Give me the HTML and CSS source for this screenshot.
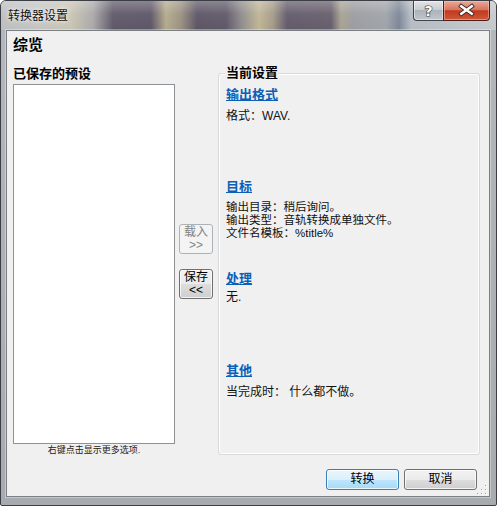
FILE: index.html
```html
<!DOCTYPE html>
<html lang="zh-CN">
<head>
<meta charset="utf-8">
<title>转换器设置</title>
<link rel="stylesheet" href="styles.css">
</head>
<body>
<div class="window">
  <div class="titlebar">
    <span class="title">转换器设置</span>
    <div class="caption-btns">
      <div class="cap help">
        <svg width="29" height="19" viewBox="0 0 29 19"><text x="14.5" y="15" text-anchor="middle" class="q">?</text></svg>
      </div>
      <div class="cap close">
        <svg width="47" height="19" viewBox="0 0 47 19">
          <path d="M18 5 L29 13 M29 5 L18 13" stroke="#3a2a28" stroke-width="4.5" stroke-linecap="square"/>
          <path d="M18 5 L29 13 M29 5 L18 13" stroke="#fff" stroke-width="2.6" stroke-linecap="square"/>
        </svg>
      </div>
    </div>
  </div>
  <div class="frame">
    <div class="client">
      <div class="page-title">综览</div>
      <div class="main">
        <div class="presets">
          <div class="label">已保存的预设</div>
          <div class="listbox"></div>
          <div class="hint">右键点击显示更多选项.</div>
        </div>
        <div class="transfer">
          <button class="btn small disabled">载入<br>&gt;&gt;</button>
          <button class="btn small save">保存<br>&lt;&lt;</button>
        </div>
        <fieldset class="group">
          <legend>当前设置</legend>
          <div class="section">
            <a class="sec-head">输出格式</a>
            <div class="sec-text">格式：WAV.</div>
          </div>
          <div class="section">
            <a class="sec-head">目标</a>
            <div class="sec-text multi">输出目录：稍后询问。<br>输出类型：音轨转换成单独文件。<br>文件名模板：%title%</div>
          </div>
          <div class="section">
            <a class="sec-head">处理</a>
            <div class="sec-text tight">无.</div>
          </div>
          <div class="section">
            <a class="sec-head">其他</a>
            <div class="sec-text">当完成时： 什么都不做。</div>
          </div>
        </fieldset>
      </div>
      <div class="footer">
        <button class="btn big default">转换</button>
        <button class="btn big">取消</button>
      </div>
      <svg class="grip" width="10" height="10" viewBox="0 0 10 10">
        <g fill="#fff">
          <rect x="9" y="1" width="1" height="1"/><rect x="9" y="5" width="1" height="1"/><rect x="9" y="9" width="1" height="1"/>
          <rect x="5" y="5" width="1" height="1"/><rect x="5" y="9" width="1" height="1"/><rect x="1" y="9" width="1" height="1"/>
        </g>
        <g fill="#a0a4a8">
          <rect x="8" y="0" width="1" height="1"/><rect x="8" y="4" width="1" height="1"/><rect x="8" y="8" width="1" height="1"/>
          <rect x="4" y="4" width="1" height="1"/><rect x="4" y="8" width="1" height="1"/><rect x="0" y="8" width="1" height="1"/>
        </g>
      </svg>
    </div>
  </div>
</div>
</body>
</html>
```
FILE: styles.css
```css
* { box-sizing: border-box; }
html, body { margin: 0; padding: 0; background: #fff; }
body {
  font-family: "Liberation Sans", "Noto Sans CJK SC", sans-serif;
  font-size: 12px;
  color: #000;
}

.window {
  width: 497px;
  height: 506px;
  border: 1px solid #3b3f45;
  border-radius: 6px 6px 2px 2px;
  display: flex;
  flex-direction: column;
  overflow: hidden;
  background: linear-gradient(to bottom, #b4b7bb, #a7aaae);
  position: relative;
}

.titlebar {
  height: 29px;
  flex: none;
  display: flex;
  align-items: flex-start;
  justify-content: space-between;
  background:
    linear-gradient(to bottom, rgba(255,255,255,0.28), rgba(255,255,255,0.05) 45%, rgba(255,255,255,0) 100%),
    linear-gradient(to right,
      #bcbec0 0px, #c4c5c3 40px, #c9c5b2 70px, #aaa8a9 92px,
      #5f5868 112px, #5e5668 150px, #b3ab8c 165px, #9a9080 180px,
      #5d5566 196px, #5f5868 225px, #8d8a8c 240px, #bfb595 258px,
      #a39a88 272px, #625a6a 286px, #675e6c 330px, #a8a290 340px,
      #9a9ca0 352px, #a0a4aa 385px, #7c8698 398px, #b5bbc2 410px,
      #c6cacd 497px);
}

.title {
  padding: 8px 0 0 7px;
  font-size: 12px;
  line-height: 14px;
  color: #111;
  text-shadow: 0 0 6px rgba(255,255,255,0.9), 0 0 3px rgba(255,255,255,0.8);
}

.caption-btns {
  display: flex;
  margin-right: 6px;
}

.cap {
  height: 20px;
  border: 1px solid #3e434b;
  border-top: none;
  display: flex;
}

.cap.help {
  width: 30px;
  border-radius: 0 0 0 4px;
  border-right: none;
  background: linear-gradient(to bottom, #e3e5e8 0%, #c9cdd2 45%, #aeb3ba 50%, #c0c6cc 100%);
  box-shadow: inset 0 0 0 1px rgba(255,255,255,0.45);
}

.cap.close {
  width: 47px;
  border-radius: 0 0 4px 0;
  border-color: #4a1d16;
  background: linear-gradient(to bottom, #e9aa9c 0%, #d8765f 45%, #c2391f 52%, #d0583a 100%);
  box-shadow: inset 0 0 0 1px rgba(255,210,200,0.45);
}

.q {
  font-family: "DejaVu Sans", sans-serif;
  font-weight: bold;
  font-size: 14px;
  fill: #fff;
  stroke: #3a3e44;
  stroke-width: 1.2px;
  paint-order: stroke;
}

.frame {
  flex: 1;
  display: flex;
  padding: 0 6px 8px 5px;
}

.client {
  flex: 1;
  position: relative;
  background: #f0f0f0;
  border: 1px solid #7b7e82;
  box-shadow: 0 0 0 1px rgba(255,255,255,0.35);
  display: flex;
  flex-direction: column;
}

.page-title {
  margin: 5px 0 0 6px;
  font-size: 15px;
  line-height: 18px;
  font-weight: bold;
}

.main {
  display: flex;
  align-items: flex-start;
  margin-top: 12px;
  padding-left: 6px;
}

.presets {
  width: 162px;
  flex: none;
}

.label {
  font-size: 13px;
  font-weight: bold;
  line-height: 16px;
}

.listbox {
  margin-top: 2px;
  height: 360px;
  background: #fff;
  border: 1px solid #8f9294;
}

.hint {
  margin-top: 1px;
  font-size: 9px;
  line-height: 11px;
  text-align: center;
  color: #222;
}

.transfer {
  width: 34px;
  flex: none;
  margin-left: 4px;
  padding-top: 158px;
  display: flex;
  flex-direction: column;
}

.btn {
  font-family: "Liberation Sans", "Noto Sans CJK SC", sans-serif;
  font-size: 12px;
  color: #000;
  padding: 0;
  border: 1px solid #707070;
  border-radius: 3px;
  background: linear-gradient(to bottom, #f2f2f2 0%, #ebebeb 50%, #dddddd 51%, #cfcfcf 100%);
  box-shadow: inset 0 0 0 1px rgba(255,255,255,0.75);
}

.btn.small {
  width: 34px;
  height: 30px;
  line-height: 13px;
}

.btn.save { margin-top: 15px; }

.btn.disabled {
  border-color: #adb2b5;
  background: #f4f4f4;
  color: #838383;
  box-shadow: none;
}

.group {
  margin: 0 0 0 5px;
  width: 262px;
  height: 389px;
  min-width: 0;
  padding: 7px 8px 0 7px;
  border: 1px solid #d5d9dc;
  border-radius: 3px;
  box-shadow: inset 0 0 0 1px #fff;
}

.group legend {
  font-size: 13px;
  font-weight: bold;
  line-height: 14px;
  padding: 0 1px;
  margin-left: -1px;
  background: #f0f0f0;
}

.section {
  height: 92px;
}

.sec-head {
  display: inline-block;
  font-size: 13px;
  font-weight: bold;
  line-height: 16px;
  color: #0a5fb8;
  text-decoration: underline;
}

.sec-text {
  margin-top: 7px;
  font-size: 12px;
  line-height: 13px;
  color: #111;
}

.sec-text.multi {
  margin-top: 6px;
  font-size: 11.5px;
  line-height: 13px;
}

.sec-text.tight { margin-top: 4px; }

.footer {
  display: flex;
  justify-content: flex-end;
  gap: 5px;
  margin-top: 13px;
  padding-right: 12px;
}

.btn.big {
  width: 73px;
  height: 21px;
  line-height: 19px;
}

.btn.default {
  border-color: #3c7fb1;
  background: linear-gradient(to bottom, #eaf6fd 0%, #d9f0fc 50%, #bee6fd 51%, #a7d9f5 100%);
}

.grip {
  position: absolute;
  right: 2px;
  bottom: 1px;
}
```
